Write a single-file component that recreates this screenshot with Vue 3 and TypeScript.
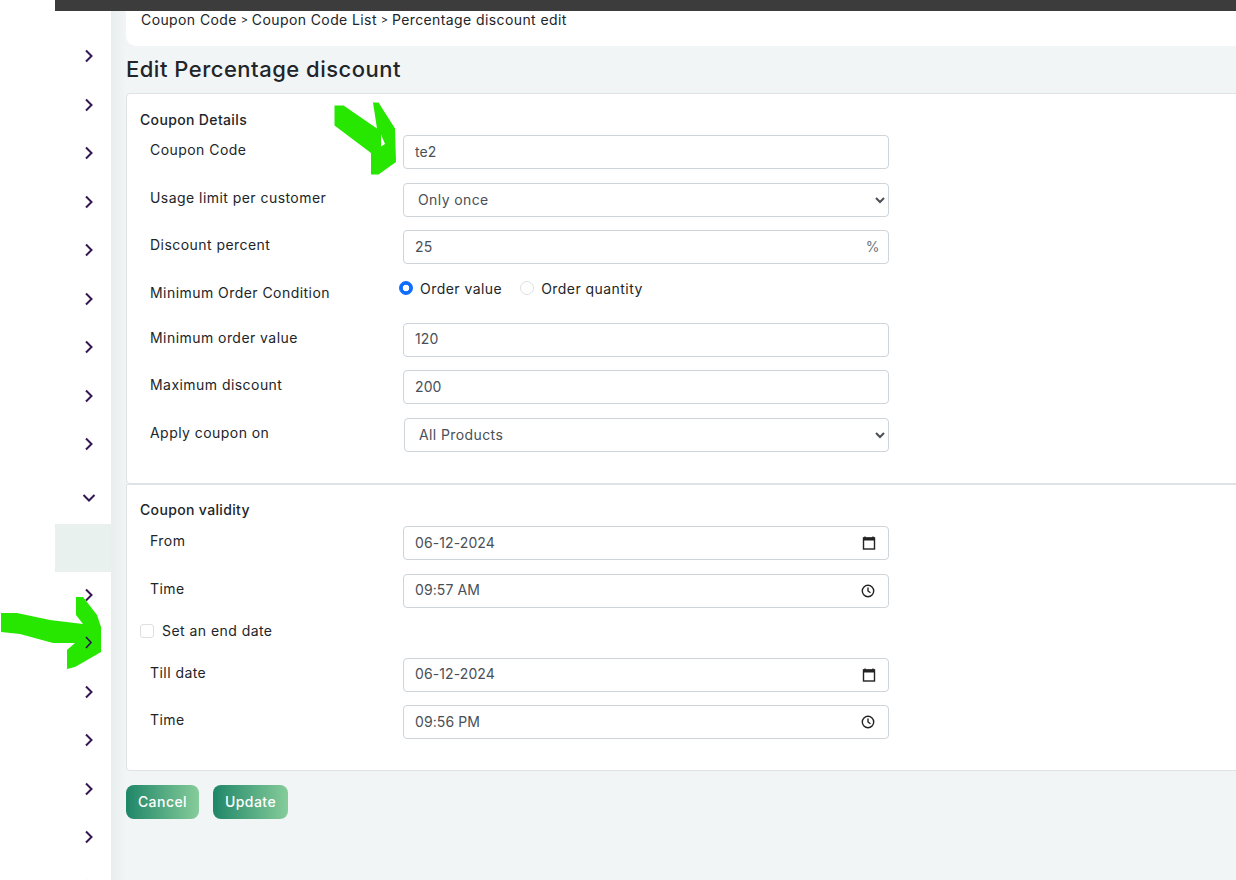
<script setup lang="ts">
import { ref } from "vue";

type Field = { label: string; value: string; kind: "text" | "select" | "percent" | "date" | "time" };

// sidebar chevrons above and below the open group
const itemsBefore = 9;
const itemsAfter = 7;

const crumbs = ["Coupon Code", "Coupon Code List", "Percentage discount edit"];

const detailsTop = ref<Field[]>([
	{ label: "Coupon Code", value: "te2", kind: "text" },
	{ label: "Usage limit per customer", value: "Only once", kind: "select" },
	{ label: "Discount percent", value: "25", kind: "percent" },
]);
const detailsBottom = ref<Field[]>([
	{ label: "Minimum order value", value: "120", kind: "text" },
	{ label: "Maximum discount", value: "200", kind: "text" },
	{ label: "Apply coupon on", value: "All Products", kind: "select" },
]);
const validityTop = ref<Field[]>([
	{ label: "From", value: "06-12-2024", kind: "date" },
	{ label: "Time", value: "09:57 AM", kind: "time" },
]);
const validityBottom = ref<Field[]>([
	{ label: "Till date", value: "06-12-2024", kind: "date" },
	{ label: "Time", value: "09:56 PM", kind: "time" },
]);
const condition = ref("value");
const hasEndDate = ref(false);
</script>

<template>
	<div class="page">
		<div class="topbar"></div>
		<div class="body">
			<aside class="sidebar">
				<div v-for="n in itemsBefore" :key="'a' + n" class="nav-item">
					<svg class="chev" viewBox="0 0 10 14"><path d="M2 1.5 7.5 7 2 12.5" /></svg>
				</div>
				<div class="nav-item open">
					<svg class="chev-down" viewBox="0 0 14 10"><path d="M1.5 2 7 7.5 12.5 2" /></svg>
				</div>
				<div class="nav-sub"></div>
				<div v-for="n in itemsAfter" :key="'b' + n" class="nav-item">
					<svg class="chev" viewBox="0 0 10 14"><path d="M2 1.5 7.5 7 2 12.5" /></svg>
				</div>
			</aside>

			<main class="main">
				<div class="crumbs">
					<template v-for="(c, i) in crumbs" :key="c">
						<span v-if="i > 0" class="sep">&gt;</span>
						<span>{{ c }}</span>
					</template>
				</div>
				<h1 class="title">Edit Percentage discount</h1>

				<section class="card first">
					<h2 class="card-title">Coupon Details</h2>
					<div v-for="f in detailsTop" :key="f.label" class="row">
						<label class="lbl">{{ f.label }}</label>
						<select v-if="f.kind === 'select'" v-model="f.value" class="ctl sel">
							<option>{{ f.value }}</option>
						</select>
						<div v-else class="ctl-wrap">
							<input v-model="f.value" class="ctl" type="text" />
							<span v-if="f.kind === 'percent'" class="suffix">%</span>
						</div>
					</div>
					<div class="row radio-row">
						<label class="lbl">Minimum Order Condition</label>
						<div class="radios">
							<label class="radio-item">
								<input v-model="condition" type="radio" value="value" class="radio" />
								Order value
							</label>
							<label class="radio-item">
								<input v-model="condition" type="radio" value="quantity" class="radio" />
								Order quantity
							</label>
						</div>
					</div>
					<div v-for="f in detailsBottom" :key="f.label" class="row">
						<label class="lbl">{{ f.label }}</label>
						<select v-if="f.kind === 'select'" v-model="f.value" class="ctl sel sel-wide">
							<option>{{ f.value }}</option>
						</select>
						<div v-else class="ctl-wrap">
							<input v-model="f.value" class="ctl" type="text" />
						</div>
					</div>
				</section>

				<section class="card second">
					<h2 class="card-title">Coupon validity</h2>
					<div v-for="f in validityTop" :key="f.label" class="row">
						<label class="lbl">{{ f.label }}</label>
						<div class="ctl-wrap">
							<input v-model="f.value" class="ctl" type="text" />
							<svg v-if="f.kind === 'date'" class="pick" viewBox="0 0 16 16">
								<path d="M4 1.5v2M12 1.5v2" class="pick-line" />
								<rect x="2.5" y="3" width="11" height="11" class="pick-line" />
								<rect x="2" y="2.5" width="12" height="3" fill="#222" />
							</svg>
							<svg v-else class="pick clock" viewBox="0 0 16 16">
								<circle cx="8" cy="8" r="5.7" class="pick-line" />
								<path d="M8 4.5V8l2.5 1.8" class="pick-line" />
							</svg>
						</div>
					</div>
					<label class="check-row">
						<input v-model="hasEndDate" type="checkbox" class="check" />
						Set an end date
					</label>
					<div v-for="f in validityBottom" :key="f.label" class="row">
						<label class="lbl">{{ f.label }}</label>
						<div class="ctl-wrap">
							<input v-model="f.value" class="ctl" type="text" />
							<svg v-if="f.kind === 'date'" class="pick" viewBox="0 0 16 16">
								<path d="M4 1.5v2M12 1.5v2" class="pick-line" />
								<rect x="2.5" y="3" width="11" height="11" class="pick-line" />
								<rect x="2" y="2.5" width="12" height="3" fill="#222" />
							</svg>
							<svg v-else class="pick clock" viewBox="0 0 16 16">
								<circle cx="8" cy="8" r="5.7" class="pick-line" />
								<path d="M8 4.5V8l2.5 1.8" class="pick-line" />
							</svg>
						</div>
					</div>
				</section>

				<div class="actions">
					<button class="btn cancel" type="button">Cancel</button>
					<button class="btn update" type="button">Update</button>
				</div>
			</main>
		</div>

		<!-- green annotation arrows painted over the screenshot -->
		<svg class="mark mark-one" viewBox="0 0 70 80">
			<path
				d="M.5 5.5H9.5L43 28.5 39 2.5H44.5L61 28.5 62 62 44.5 74.5H37V53L.5 25.5Z M47 34.5 51 44 47 46.5Z"
				fill="#27e600"
				fill-rule="evenodd"
			/>
		</svg>
		<svg class="mark mark-two" viewBox="0 0 110 80">
			<path
				d="M1 16H17L50 23 83 27 76 18V0H83L97 18 101 30V55L75 70 67 72V53L75 46 53 46 20 37 1 35Z"
				fill="#27e600"
			/>
			<path d="M86 40 91 45.5 86 51" fill="none" stroke="#2b1550" stroke-width="1.6" />
		</svg>
	</div>
</template>

<style>
html,
body {
	margin: 0;
	background: #fff;
}
</style>

<style scoped>
.page {
	position: relative;
	height: 880px;
	overflow: hidden;
	font-family: Inter, "Liberation Sans", sans-serif;
	color: #212529;
	font-size: 14px;
	letter-spacing: 0.45px;
}

.topbar {
	height: 11px;
	margin-left: 55px;
	background: #3c3c3c;
}

.body {
	display: flex;
	height: 869px;
}

.sidebar {
	width: 56px;
	margin-left: 55px;
	padding-top: 21px;
	flex-shrink: 0;
	background: #fff;
}

.nav-item {
	display: flex;
	align-items: center;
	height: 48.5px;
	padding-left: 29px;
}

.nav-item.open {
	margin-top: 5px;
}

.nav-sub {
	height: 48px;
	margin: 2px 0 -1.3px;
	background: #e8f1ee;
}

.chev {
	width: 10px;
	height: 14px;
}

.chev-down {
	width: 14px;
	height: 10px;
	margin-left: -2px;
}

.chev path,
.chev-down path {
	fill: none;
	stroke: #331653;
	stroke-width: 2;
}

.main {
	flex: 1;
	min-width: 0;
	padding-left: 15px;
	background: linear-gradient(90deg, #e8eded 0, #f1f5f6 15px);
}

.crumbs {
	display: flex;
	height: 35px;
	padding-left: 15px;
	line-height: 18px;
	background: #fff;
	border-bottom-left-radius: 10px;
	letter-spacing: 0.4px;
}

.sep {
	width: 15px;
	text-align: center;
	font-size: 11px;
	letter-spacing: 0;
}

.title {
	margin: 0;
	padding: 8px 0 0 0;
	height: 39px;
	line-height: 30px;
	font-size: 22px;
	font-weight: 500;
	letter-spacing: 0.5px;
}

.card {
	margin-right: -12px;
	background: #fff;
	border: 1px solid #dfe3e6;
	border-radius: 4px 0 0 4px;
	padding: 15px 14px 31px 13px;
}

.card.second {
	padding-top: 14px;
	padding-bottom: 30.5px;
	border-radius: 0 0 0 4px;
}

.card-title {
	margin: 0 0 5px;
	line-height: 21px;
	font-size: 14px;
	font-weight: 500;
	letter-spacing: 0.35px;
}

.second .card-title {
	margin-bottom: 6.25px;
}

.row {
	display: flex;
	min-height: 34px;
	margin-bottom: 13.5px;
}

.row:last-child {
	margin-bottom: 0;
}

.lbl {
	width: 253px;
	padding: 4px 0 0 10px;
	line-height: 21px;
	flex-shrink: 0;
}

.ctl-wrap {
	position: relative;
	width: 486px;
}

.ctl {
	box-sizing: border-box;
	width: 486px;
	height: 34px;
	padding: 0 11px 2px;
	border: 1px solid #ced4da;
	border-radius: 4px;
	background: #fff;
	color: #495057;
	font: inherit;
	letter-spacing: 0.1px;
	outline: none;
}

.sel {
	padding: 0 0 0 10px;
	letter-spacing: 0.4px;
}

.sel-wide {
	width: 485px;
	margin-left: 1px;
}

.suffix {
	position: absolute;
	right: 9px;
	top: 8px;
	color: #6c757d;
	line-height: 18px;
}

.pick {
	position: absolute;
	right: 12px;
	top: 9px;
	width: 16px;
	height: 16px;
}

.pick.clock {
	right: 13px;
}

.pick-line {
	fill: none;
	stroke: #222;
	stroke-width: 1.4;
}

.radio-row {
	min-height: 31.75px;
}

.radios {
	display: flex;
	gap: 18px;
	margin-left: -4px;
	height: 21px;
}

.radio-item {
	display: flex;
	align-items: center;
	gap: 7px;
}

.radio {
	appearance: none;
	box-sizing: border-box;
	width: 14px;
	height: 14px;
	margin: 0;
	border: 1px solid #dde0e3;
	border-radius: 50%;
	background: #fff;
}

.radio:checked {
	border-color: #0d6efd;
	background: radial-gradient(circle, #fff 0 3px, #0d6efd 3.6px);
}

.check-row {
	display: flex;
	align-items: center;
	gap: 8px;
	height: 21px;
	margin: -1px 0 16.5px;
}

.check {
	appearance: none;
	box-sizing: border-box;
	width: 14px;
	height: 14px;
	margin: 0;
	border: 1px solid #dde0e3;
	border-radius: 3px;
	background: #fff;
}

.actions {
	display: flex;
	gap: 14px;
	margin-top: 14px;
}

.btn {
	height: 34px;
	padding: 0;
	border: none;
	border-radius: 8px;
	background: linear-gradient(90deg, #1f8668, #86cc9a);
	color: #fff;
	font: inherit;
	font-weight: 500;
	letter-spacing: 0.45px;
}

.cancel {
	width: 73px;
}

.update {
	width: 75px;
}

.mark {
	position: absolute;
	pointer-events: none;
}

.mark-one {
	left: 334px;
	top: 100px;
	width: 70px;
	height: 80px;
}

.mark-two {
	left: 0;
	top: 597px;
	width: 110px;
	height: 80px;
}
</style>
